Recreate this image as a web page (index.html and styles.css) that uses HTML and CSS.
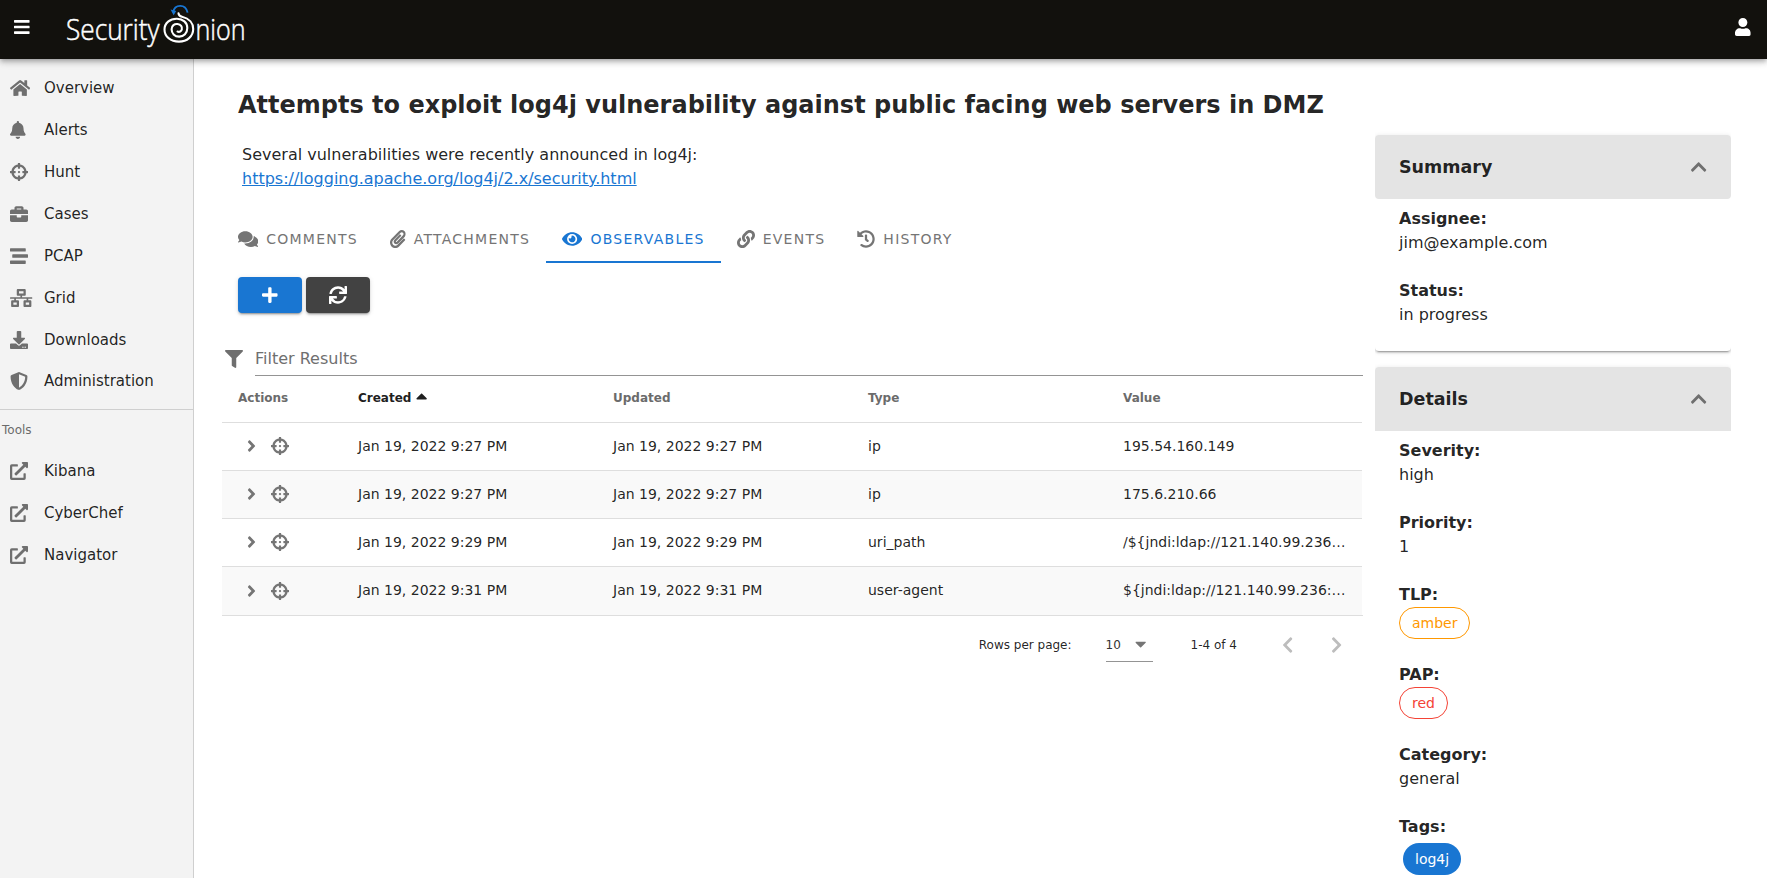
FILE: index.html
```html
<!DOCTYPE html>
<html lang="en">
<head>
<meta charset="utf-8">
<title>Security Onion</title>
<link rel="stylesheet" href="styles.css">
</head>
<body>
<svg class="sprite" aria-hidden="true">
  <symbol id="bars" viewBox="0 0 448 512"><path d="M16 132h416c8.837 0 16-7.163 16-16V76c0-8.837-7.163-16-16-16H16C7.163 60 0 67.163 0 76v40c0 8.837 7.163 16 16 16zm0 160h416c8.837 0 16-7.163 16-16v-40c0-8.837-7.163-16-16-16H16c-8.837 0-16 7.163-16 16v40c0 8.837 7.163 16 16 16zm0 160h416c8.837 0 16-7.163 16-16v-40c0-8.837-7.163-16-16-16H16c-8.837 0-16 7.163-16 16v40c0 8.837 7.163 16 16 16z"/></symbol>
  <symbol id="user" viewBox="0 0 448 512"><path d="M224 256c70.7 0 128-57.3 128-128S294.7 0 224 0 96 57.3 96 128s57.3 128 128 128zm89.6 32h-16.7c-22.2 10.2-46.9 16-72.9 16s-50.6-5.8-72.9-16h-16.7C60.2 288 0 348.2 0 422.4V464c0 26.5 21.5 48 48 48h352c26.5 0 48-21.5 48-48v-41.6c0-74.2-60.2-134.4-134.4-134.4z"/></symbol>
  <symbol id="home" viewBox="0 0 576 512"><path d="M280.37 148.26L96 300.11V464a16 16 0 0 0 16 16l112.06-.29a16 16 0 0 0 15.92-16V368a16 16 0 0 1 16-16h64a16 16 0 0 1 16 16v95.64a16 16 0 0 0 16 16.05L464 480a16 16 0 0 0 16-16V300L295.67 148.26a12.19 12.19 0 0 0-15.3 0zM571.6 251.47L488 182.56V44.05a12 12 0 0 0-12-12h-56a12 12 0 0 0-12 12v72.61L318.47 43a48 48 0 0 0-61 0L4.34 251.47a12 12 0 0 0-1.6 16.9l25.5 31A12 12 0 0 0 45.15 301l235.22-193.74a12.19 12.19 0 0 1 15.3 0L530.9 301a12 12 0 0 0 16.9-1.6l25.5-31a12 12 0 0 0-1.7-16.93z"/></symbol>
  <symbol id="bell" viewBox="0 0 448 512"><path d="M224 512c35.32 0 63.97-28.65 63.97-64H160.03c0 35.35 28.65 64 63.97 64zm215.39-149.71c-19.32-20.76-55.47-51.99-55.47-154.29 0-77.7-54.48-139.9-127.94-155.16V32c0-17.67-14.32-32-31.98-32s-31.98 14.33-31.98 32v20.84C118.56 68.1 64.08 130.3 64.08 208c0 102.3-36.15 133.53-55.47 154.29-6 6.45-8.66 14.16-8.61 21.71.11 16.4 12.98 32 32.1 32h383.8c19.12 0 32-15.6 32.1-32 .05-7.55-2.61-15.27-8.61-21.71z"/></symbol>
  <symbol id="crosshairs" viewBox="0 0 512 512"><path d="M500 224h-30.364C455.724 130.325 381.675 56.276 288 42.364V12c0-6.627-5.373-12-12-12h-40c-6.627 0-12 5.373-12 12v30.364C130.325 56.276 56.276 130.325 42.364 224H12c-6.627 0-12 5.373-12 12v40c0 6.627 5.373 12 12 12h30.364C56.276 381.675 130.325 455.724 224 469.636V500c0 6.627 5.373 12 12 12h40c6.627 0 12-5.373 12-12v-30.364C381.675 455.724 455.724 381.675 469.636 288H500c6.627 0 12-5.373 12-12v-40c0-6.627-5.373-12-12-12zM288 404.634V364c0-6.627-5.373-12-12-12h-40c-6.627 0-12 5.373-12 12v40.634C165.826 392.232 119.783 346.243 107.366 288H148c6.627 0 12-5.373 12-12v-40c0-6.627-5.373-12-12-12h-40.634C119.768 165.826 165.757 119.783 224 107.366V148c0 6.627 5.373 12 12 12h40c6.627 0 12-5.373 12-12v-40.634C346.174 119.768 392.217 165.757 404.634 224H364c-6.627 0-12 5.373-12 12v40c0 6.627 5.373 12 12 12h40.634C392.232 346.174 346.243 392.217 288 404.634zM288 256c0 17.673-14.327 32-32 32s-32-14.327-32-32c0-17.673 14.327-32 32-32s32 14.327 32 32z"/></symbol>
  <symbol id="briefcase" viewBox="0 0 512 512"><path d="M320 336c0 8.84-7.16 16-16 16h-96c-8.84 0-16-7.16-16-16v-48H0v144c0 25.6 22.4 48 48 48h416c25.6 0 48-22.4 48-48V288H320v48zm144-208h-80V80c0-25.6-22.4-48-48-48H176c-25.6 0-48 22.4-48 48v48H48c-25.6 0-48 22.4-48 48v80h512v-80c0-25.6-22.4-48-48-48zm-144 0H192V96h128v32z"/></symbol>
  <symbol id="stream" viewBox="0 0 512 512"><path d="M16 128h416c8.84 0 16-7.16 16-16V48c0-8.84-7.16-16-16-16H16C7.16 32 0 39.16 0 48v64c0 8.84 7.16 16 16 16zm480 80H80c-8.84 0-16 7.16-16 16v64c0 8.84 7.16 16 16 16h416c8.84 0 16-7.16 16-16v-64c0-8.84-7.16-16-16-16zm-64 176H16c-8.84 0-16 7.16-16 16v64c0 8.84 7.16 16 16 16h416c8.84 0 16-7.16 16-16v-64c0-8.84-7.16-16-16-16z"/></symbol>
  <symbol id="network" viewBox="0 0 640 512"><path d="M640 264v-16c0-8.84-7.16-16-16-16H344v-40h72c17.67 0 32-14.33 32-32V32c0-17.67-14.33-32-32-32H224c-17.67 0-32 14.33-32 32v128c0 17.67 14.33 32 32 32h72v40H16c-8.84 0-16 7.16-16 16v16c0 8.84 7.16 16 16 16h104v40H64c-17.67 0-32 14.33-32 32v128c0 17.67 14.33 32 32 32h160c17.67 0 32-14.33 32-32V352c0-17.67-14.33-32-32-32h-56v-40h304v40h-56c-17.67 0-32 14.33-32 32v128c0 17.67 14.33 32 32 32h160c17.67 0 32-14.33 32-32V352c0-17.67-14.33-32-32-32h-56v-40h104c8.84 0 16-7.16 16-16zM256 128V64h128v64H256zm-64 320H96v-64h96v64zm352 0h-96v-64h96v64z"/></symbol>
  <symbol id="download" viewBox="0 0 512 512"><path d="M216 0h80c13.3 0 24 10.7 24 24v168h87.7c17.8 0 26.7 21.5 14.1 34.1L269.7 378.3c-7.5 7.5-19.8 7.5-27.3 0L90.1 226.1c-12.6-12.6-3.7-34.1 14.1-34.1H192V24c0-13.3 10.7-24 24-24zm296 376v112c0 13.3-10.7 24-24 24H24c-13.3 0-24-10.7-24-24V376c0-13.3 10.7-24 24-24h146.7l49 49c20.1 20.1 52.5 20.1 72.6 0l49-49H488c13.3 0 24 10.7 24 24zm-124 88c0-11-9-20-20-20s-20 9-20 20 9 20 20 20 20-9 20-20zm64 0c0-11-9-20-20-20s-20 9-20 20 9 20 20 20 20-9 20-20z"/></symbol>
  <symbol id="shield" viewBox="0 0 512 512"><path d="M466.5 83.7l-192-80a48.15 48.15 0 0 0-36.9 0l-192 80C27.7 91.1 16 108.6 16 128c0 198.5 114.5 335.7 221.5 380.3 11.8 4.9 25.1 4.9 36.9 0C360.1 472.6 496 349.3 496 128c0-19.4-11.7-36.9-29.5-44.3zM256.1 446.3l-.1-381 175.9 73.3c-3.3 151.4-82.1 261.1-175.8 307.7z"/></symbol>
  <symbol id="external" viewBox="0 0 512 512"><path d="M432,320H400a16,16,0,0,0-16,16V448H64V128H208a16,16,0,0,0,16-16V80a16,16,0,0,0-16-16H48A48,48,0,0,0,0,112V464a48,48,0,0,0,48,48H400a48,48,0,0,0,48-48V336A16,16,0,0,0,432,320ZM488,0h-128c-21.37,0-32.05,25.91-17,41l35.73,35.73L135,320.37a24,24,0,0,0,0,34L157.67,377a24,24,0,0,0,34,0L435.28,133.32,471,169c15,15,41,4.5,41-17V24A24,24,0,0,0,488,0Z"/></symbol>
  <symbol id="comments" viewBox="0 0 576 512"><path d="M416 192c0-88.4-93.1-160-208-160S0 103.6 0 192c0 34.3 14.1 65.9 38 92-13.4 30.2-35.5 54.2-35.8 54.5-2.2 2.3-2.8 5.7-1.5 8.7S4.8 352 8 352c36.6 0 66.9-12.3 88.7-25 32.2 15.7 70.3 25 111.3 25 114.9 0 208-71.6 208-160zm122 220c23.9-26 38-57.7 38-92 0-66.9-53.5-124.2-129.3-148.1.9 6.6 1.3 13.3 1.3 20.1 0 105.9-107.7 192-240 192-10.8 0-21.3-.8-31.7-1.9C207.8 439.6 281.8 480 368 480c41 0 79.1-9.2 111.3-25 21.8 12.7 52.1 25 88.7 25 3.2 0 6.1-1.9 7.3-4.8 1.3-2.9.7-6.3-1.5-8.7-.3-.3-22.4-24.2-35.8-54.5z"/></symbol>
  <symbol id="paperclip" viewBox="0 0 448 512"><path d="M43.246 466.142c-58.43-60.289-57.341-157.511 1.386-217.581L254.392 34c44.316-45.332 116.351-45.336 160.671 0 43.89 44.894 43.943 117.329 0 162.276L232.214 383.128c-29.855 30.537-78.633 30.111-107.982-.998-28.275-29.97-27.368-77.473 1.452-106.953l143.743-146.835c6.182-6.314 16.312-6.422 22.626-.241l22.861 22.379c6.315 6.182 6.422 16.312.241 22.626L171.427 319.927c-4.932 5.045-5.236 13.428-.648 18.292 4.372 4.634 11.245 4.711 15.688.165l182.849-186.851c19.613-20.062 19.613-52.725-.011-72.798-19.189-19.627-49.957-19.637-69.154 0L90.39 293.295c-34.763 35.56-35.299 93.12-1.191 128.313 34.01 35.093 88.985 35.137 123.058.286l172.06-175.999c6.177-6.319 16.307-6.433 22.626-.256l22.877 22.364c6.319 6.177 6.434 16.307.256 22.626l-172.06 175.998c-59.576 60.938-155.943 60.216-214.77-.485z"/></symbol>
  <symbol id="eye" viewBox="0 0 576 512"><path d="M572.52 241.4C518.29 135.59 410.93 64 288 64S57.68 135.64 3.48 241.41a32.35 32.35 0 0 0 0 29.19C57.71 376.41 165.07 448 288 448s230.32-71.64 284.52-177.41a32.35 32.35 0 0 0 0-29.19zM288 400a144 144 0 1 1 144-144 143.93 143.93 0 0 1-144 144zm0-240a95.31 95.31 0 0 0-25.31 3.79 47.85 47.85 0 0 1-66.9 66.9A95.78 95.78 0 1 0 288 160z"/></symbol>
  <symbol id="link" viewBox="0 0 512 512"><path d="M326.612 185.391c59.747 59.809 58.927 155.698.36 214.59-.11.12-.24.25-.36.37l-67.2 67.2c-59.27 59.27-155.699 59.262-214.96 0-59.27-59.26-59.27-155.7 0-214.96l37.106-37.106c9.84-9.84 26.786-3.3 27.294 10.606.648 17.722 3.826 35.527 9.69 52.721 1.986 5.822.567 12.262-3.783 16.612l-13.087 13.087c-28.026 28.026-28.905 73.66-1.155 101.96 28.024 28.579 74.086 28.749 102.325.51l67.2-67.19c28.191-28.191 28.073-73.757 0-101.83-3.701-3.694-7.429-6.564-10.341-8.569a16.037 16.037 0 0 1-6.947-12.606c-.396-10.567 3.348-21.456 11.698-29.806l21.054-21.055c5.521-5.521 14.182-6.199 20.584-1.731a152.482 152.482 0 0 1 20.522 17.197zM467.547 44.449c-59.261-59.262-155.69-59.27-214.96 0l-67.2 67.2c-.12.12-.25.25-.36.37-58.566 58.892-59.387 154.781.36 214.59a152.454 152.454 0 0 0 20.521 17.196c6.402 4.468 15.064 3.789 20.584-1.731l21.054-21.055c8.35-8.35 12.094-19.239 11.698-29.806a16.037 16.037 0 0 0-6.947-12.606c-2.912-2.005-6.64-4.875-10.341-8.569-28.073-28.073-28.191-73.639 0-101.83l67.2-67.19c28.239-28.239 74.3-28.069 102.325.51 27.75 28.3 26.872 73.934-1.155 101.96l-13.087 13.087c-4.35 4.35-5.769 10.79-3.783 16.612 5.864 17.194 9.042 34.999 9.69 52.721.509 13.906 17.454 20.446 27.294 10.606l37.106-37.106c59.271-59.259 59.271-155.699.001-214.959z"/></symbol>
  <symbol id="history" viewBox="0 0 512 512"><path d="M504 255.531c.253 136.64-111.18 248.372-247.82 248.468-59.015.042-113.223-20.53-155.822-54.911-11.077-8.94-11.905-25.541-1.839-35.607l11.267-11.267c8.609-8.609 22.353-9.551 31.891-1.984C173.062 425.135 212.781 440 256 440c101.705 0 184-82.311 184-184 0-101.705-82.311-184-184-184-48.814 0-93.149 18.969-126.068 49.932l50.754 50.754c10.08 10.08 2.941 27.314-11.313 27.314H24c-8.837 0-16-7.163-16-16V38.627c0-14.254 17.234-21.393 27.314-11.314l49.372 49.372C129.209 34.136 189.552 8 256 8c136.81 0 247.747 110.78 248 247.531zm-180.912 78.784l9.823-12.63c8.138-10.463 6.253-25.542-4.21-33.679L288 256.349V152c0-13.255-10.745-24-24-24h-16c-13.255 0-24 10.745-24 24v135.651l65.409 50.874c10.463 8.137 25.541 6.253 33.679-4.21z"/></symbol>
  <symbol id="plus" viewBox="0 0 448 512"><path d="M416 208H272V64c0-17.67-14.33-32-32-32h-32c-17.67 0-32 14.33-32 32v144H32c-17.67 0-32 14.33-32 32v32c0 17.67 14.33 32 32 32h144v144c0 17.67 14.33 32 32 32h32c17.67 0 32-14.33 32-32V304h144c17.67 0 32-14.33 32-32v-32c0-17.67-14.33-32-32-32z"/></symbol>
  <symbol id="sync" viewBox="0 0 512 512"><path d="M440.65 12.57l4 82.77A247.16 247.16 0 0 0 255.83 8C134.73 8 33.91 94.92 12.29 209.82A12 12 0 0 0 24.09 224h49.05a12 12 0 0 0 11.67-9.26 175.91 175.91 0 0 1 317-56.94l-101.46-4.86a12 12 0 0 0-12.57 12v47.41a12 12 0 0 0 12 12H500a12 12 0 0 0 12-12V12a12 12 0 0 0-12-12h-47.37a12 12 0 0 0-11.98 12.57zM255.83 432a175.61 175.61 0 0 1-146-77.8l101.8 4.87a12 12 0 0 0 12.57-12v-47.4a12 12 0 0 0-12-12H12a12 12 0 0 0-12 12V500a12 12 0 0 0 12 12h47.35a12 12 0 0 0 12-12.6l-4.15-82.57A247.17 247.17 0 0 0 255.83 504c121.11 0 221.93-86.92 243.55-201.82a12 12 0 0 0-11.8-14.18h-49.05a12 12 0 0 0-11.67 9.26A175.86 175.86 0 0 1 255.83 432z"/></symbol>
  <symbol id="filter" viewBox="0 0 512 512"><path d="M487.976 0H24.028C2.71 0-8.047 25.866 7.058 40.971L192 225.941V432c0 7.831 3.821 15.17 10.237 19.662l80 55.98C298.02 518.69 320 507.493 320 487.98V225.941l184.947-184.97C520.021 25.896 509.338 0 487.976 0z"/></symbol>
  <symbol id="angle" viewBox="0 0 256 512"><path d="M224.3 273l-136 136c-9.4 9.4-24.6 9.4-33.9 0l-22.6-22.6c-9.4-9.4-9.4-24.6 0-33.9l96.4-96.4-96.4-96.4c-9.4-9.4-9.4-24.6 0-33.9L54.3 103c9.4-9.4 24.6-9.4 33.9 0l136 136c9.5 9.4 9.5 24.6.1 34z"/></symbol>
  <symbol id="chevron" viewBox="0 0 320 512"><path d="M34.52 239.03L228.87 44.69c9.37-9.37 24.57-9.37 33.94 0l22.67 22.67c9.36 9.36 9.37 24.52.04 33.9L131.49 256l154.02 154.75c9.34 9.38 9.32 24.54-.04 33.9l-22.67 22.67c-9.37 9.37-24.57 9.37-33.94 0L34.52 272.97c-9.37-9.37-9.37-24.57 0-33.94z"/></symbol>
  <symbol id="caret" viewBox="0 0 320 512"><path d="M288.662 352H31.338c-17.818 0-26.741-21.543-14.142-34.142l128.662-128.662c7.81-7.81 20.474-7.81 28.284 0l128.662 128.662c12.6 12.599 3.676 34.142-14.142 34.142z"/></symbol>
</svg>

<header class="appbar">
  <svg class="icon w448"><use href="#bars"/></svg>
  <svg class="logo" viewBox="0 0 190 50" role="img" aria-label="Security Onion">
    <text class="logo-text" x="6" y="39.6" textLength="93.500" lengthAdjust="spacingAndGlyphs">Security</text>
    <text class="logo-text" x="135.500" y="39.6" textLength="50" lengthAdjust="spacingAndGlyphs">nion</text>
    <path class="bulb" d="M118.5 13.300C118.700 15.500 120 16.300 122 16.800C129.500 18.500 133.200 23.500 133.200 29C133.200 36.500 127 41.600 119 41.600C110.500 41.600 104.500 36.500 104.500 29.500C104.500 23 110 18.600 117 18.800C123 19 127.300 22.500 127.300 28C127.300 33 123.800 36.600 119.200 36.600C114.500 36.600 111.600 33.200 111.600 29.200C111.600 25.600 114.500 23.600 117.500 24C120.800 24.400 122.500 27 121.800 29.500C121.300 31.300 119.500 32.300 117.500 31.600"/>
    <path class="sprout" d="M113 12.500C113.700 8.600 116.500 5.900 120.300 5.900C124 5.900 126.600 8.400 127.600 12.600"/>
    <path class="sprout-tip" d="M110.600 9.600l3 5.700l2.600-4.300z"/>
  </svg>
  <svg class="icon w448 account"><use href="#user"/></svg>
</header>

<div class="shell">
  <nav class="sidebar">
    <a class="nav-item"><span class="nav-icon"><svg class="icon w576"><use href="#home"/></svg></span>Overview</a>
    <a class="nav-item"><span class="nav-icon"><svg class="icon w448"><use href="#bell"/></svg></span>Alerts</a>
    <a class="nav-item"><span class="nav-icon"><svg class="icon"><use href="#crosshairs"/></svg></span>Hunt</a>
    <a class="nav-item"><span class="nav-icon"><svg class="icon"><use href="#briefcase"/></svg></span>Cases</a>
    <a class="nav-item"><span class="nav-icon"><svg class="icon"><use href="#stream"/></svg></span>PCAP</a>
    <a class="nav-item"><span class="nav-icon"><svg class="icon w640"><use href="#network"/></svg></span>Grid</a>
    <a class="nav-item"><span class="nav-icon"><svg class="icon"><use href="#download"/></svg></span>Downloads</a>
    <a class="nav-item last"><span class="nav-icon"><svg class="icon"><use href="#shield"/></svg></span>Administration</a>
    <div class="nav-heading">Tools</div>
    <a class="nav-item"><span class="nav-icon"><svg class="icon"><use href="#external"/></svg></span>Kibana</a>
    <a class="nav-item"><span class="nav-icon"><svg class="icon"><use href="#external"/></svg></span>CyberChef</a>
    <a class="nav-item"><span class="nav-icon"><svg class="icon"><use href="#external"/></svg></span>Navigator</a>
  </nav>

  <main class="case">
    <h1 class="case-title">Attempts to exploit log4j vulnerability against public facing web servers in DMZ</h1>
    <div class="description">Several vulnerabilities were recently announced in log4j:<br><a class="link">https://logging.apache.org/log4j/2.x/security.html</a></div>

    <div class="tabs">
      <div class="tab"><svg class="icon w576"><use href="#comments"/></svg>COMMENTS</div>
      <div class="tab"><svg class="icon w448"><use href="#paperclip"/></svg>ATTACHMENTS</div>
      <div class="tab active"><svg class="icon w576"><use href="#eye"/></svg>OBSERVABLES</div>
      <div class="tab"><svg class="icon"><use href="#link"/></svg>EVENTS</div>
      <div class="tab"><svg class="icon"><use href="#history"/></svg>HISTORY</div>
    </div>

    <div class="buttons">
      <button class="btn primary"><svg class="icon w448"><use href="#plus"/></svg></button>
      <button class="btn dark"><svg class="icon"><use href="#sync"/></svg></button>
    </div>

    <div class="filter"><svg class="icon"><use href="#filter"/></svg><div class="filter-input">Filter Results</div></div>

    <table class="grid">
      <thead><tr><th class="actions">Actions</th><th class="sorted"><div class="sort-head">Created<svg class="icon w320 sort"><use href="#caret"/></svg></div></th><th>Updated</th><th>Type</th><th>Value</th></tr></thead>
      <tbody>
        <tr><td><div class="row-actions"><svg class="icon w256"><use href="#angle"/></svg><svg class="icon"><use href="#crosshairs"/></svg></div></td><td>Jan 19, 2022 9:27 PM</td><td>Jan 19, 2022 9:27 PM</td><td>ip</td><td>195.54.160.149</td></tr>
        <tr><td><div class="row-actions"><svg class="icon w256"><use href="#angle"/></svg><svg class="icon"><use href="#crosshairs"/></svg></div></td><td>Jan 19, 2022 9:27 PM</td><td>Jan 19, 2022 9:27 PM</td><td>ip</td><td>175.6.210.66</td></tr>
        <tr><td><div class="row-actions"><svg class="icon w256"><use href="#angle"/></svg><svg class="icon"><use href="#crosshairs"/></svg></div></td><td>Jan 19, 2022 9:29 PM</td><td>Jan 19, 2022 9:29 PM</td><td>uri_path</td><td>/${jndi:ldap://121.140.99.236…</td></tr>
        <tr><td><div class="row-actions"><svg class="icon w256"><use href="#angle"/></svg><svg class="icon"><use href="#crosshairs"/></svg></div></td><td>Jan 19, 2022 9:31 PM</td><td>Jan 19, 2022 9:31 PM</td><td>user-agent</td><td>${jndi:ldap://121.140.99.236:…</td></tr>
      </tbody>
    </table>
    <div class="pager">
      <span class="pager-label">Rows per page:</span>
      <div class="select"><span>10</span><svg class="icon w320 down"><use href="#caret"/></svg></div>
      <span class="range">1-4 of 4</span>
      <svg class="icon w320 page"><use href="#chevron"/></svg>
      <svg class="icon w320 page next"><use href="#chevron"/></svg>
    </div>
  </main>

  <aside class="panels">
    <section class="panel">
      <div class="panel-head">Summary<svg class="icon w320 up"><use href="#chevron"/></svg></div>
      <dl class="fields">
        <div class="field"><dt>Assignee:</dt><dd>jim@example.com</dd></div>
        <div class="field"><dt>Status:</dt><dd>in progress</dd></div>
      </dl>
    </section>
    <section class="panel">
      <div class="panel-head square">Details<svg class="icon w320 up"><use href="#chevron"/></svg></div>
      <dl class="fields">
        <div class="field"><dt>Severity:</dt><dd>high</dd></div>
        <div class="field"><dt>Priority:</dt><dd>1</dd></div>
        <div class="field"><dt>TLP:</dt><dd><span class="chip amber">amber</span></dd></div>
        <div class="field"><dt>PAP:</dt><dd><span class="chip red">red</span></dd></div>
        <div class="field"><dt>Category:</dt><dd>general</dd></div>
        <div class="field"><dt>Tags:</dt><dd><span class="chip tag">log4j</span></dd></div>
      </dl>
    </section>
  </aside>
</div>
</body>
</html>
```
FILE: styles.css
```css
* { box-sizing: border-box; }
body {
  margin: 0;
  height: 878px;
  overflow: hidden;
  background: #fff;
  color: rgba(0, 0, 0, .87);
  font: 16px/24px "DejaVu Sans", sans-serif;
}
.sprite { display: none; }
.icon { width: 18px; height: 18px; flex: none; fill: currentColor; }
.w256 { width: 9px; }
.w320 { width: 11.25px; }
.w448 { width: 15.75px; }
.w576 { width: 20.25px; }
.w640 { width: 22.5px; }

.appbar {
  position: relative;
  z-index: 1;
  display: flex;
  align-items: center;
  height: 59px;
  padding: 0 16px 5px 14px;
  background: #12110d;
  color: #fff;
  box-shadow: 0 2px 4px -1px rgba(0, 0, 0, .2), 0 4px 5px rgba(0, 0, 0, .14), 0 1px 10px rgba(0, 0, 0, .12);
}
.logo { width: 190px; height: 50px; margin-left: 30.25px; align-self: flex-start; overflow: visible; }
.logo-text { font-family: "Open Sans", sans-serif; font-weight: 300; font-size: 29px; fill: #fff; stroke: #fff; stroke-width: .5; }
.bulb { fill: none; stroke: #fff; stroke-width: 2.1; stroke-linecap: round; }
.sprout { fill: none; stroke: #1976d2; stroke-width: 1.9; }
.sprout-tip { fill: #1976d2; }
.account { margin-left: auto; }

.shell { display: flex; height: 819px; }
.sidebar { width: 194px; padding-top: 8px; background: #f3f3f3; border-right: 1px solid #cfcfcf; font-size: 15px; }
.nav-item { display: flex; align-items: center; height: 42px; padding-left: 10px; }
.nav-icon { display: flex; width: 34px; color: #6f6f6f; }
.last { height: 40px; }
.nav-heading { height: 41px; margin-top: 8px; padding-left: 2px; border-top: 1px solid #cfcfcf; font-size: 12px; line-height: 41px; color: #6b6b6b; }

.case { width: 1141px; margin-left: 28px; padding-top: 30px; }
.case-title { margin: 0; padding-left: 16px; font-size: 24px; line-height: 32px; white-space: nowrap; }
.description { padding: 22px 20px 0; }
.link { color: #1976d2; text-decoration: underline; }
.tabs { display: flex; height: 48px; margin-top: 24px; font-size: 14px; letter-spacing: 1.25px; color: #757575; }
.tab { display: flex; align-items: center; gap: 8px; padding: 2px 16px 0; border-bottom: 2px solid transparent; }
.active { color: #1976d2; border-color: #1976d2; }
.buttons { display: flex; gap: 4px; padding: 14px 16px 0; }
.btn {
  display: flex;
  align-items: center;
  justify-content: center;
  width: 64px;
  height: 36px;
  padding: 0;
  border: 0;
  border-radius: 4px;
  color: #fff;
  box-shadow: 0 3px 1px -2px rgba(0, 0, 0, .2), 0 2px 2px rgba(0, 0, 0, .14), 0 1px 5px rgba(0, 0, 0, .12);
}
.primary { background: #1976d2; }
.dark { background: #424242; }

.filter { display: flex; gap: 12px; height: 33px; margin-top: 30px; padding-left: 3px; color: #6f6f6f; }
.filter > .icon { margin-top: 7px; }
.filter-input { flex: 1; padding-top: 4px; border-bottom: 1px solid #949494; }

.grid { width: 1140px; table-layout: fixed; border-spacing: 0; font-size: 14px; line-height: 20px; }
.grid th { height: 47px; padding: 0 16px 2px; border-bottom: 1px solid #dedede; font-size: 12px; text-align: left; color: #6b6b6b; }
.grid .actions { width: 120px; }
.grid .sorted { color: #1f1f1f; }
.sort-head { display: flex; align-items: flex-start; gap: 5px; height: 20px; }
.sort { margin-top: -1px; }
.grid td { height: 48px; padding: 0 16px 2px; border-bottom: 1px solid #dedede; white-space: nowrap; }
.grid tr:last-child td { border-bottom: 0; }
.grid tbody tr:nth-child(even) { background: #f9f9f9; }
.row-actions { display: flex; gap: 14.5px; padding: 1px 0 0 9px; color: #757575; }
.grid thead tr:last-child th { border-bottom: 1px solid #dedede; }

.pager { display: flex; align-items: center; height: 60px; padding: 0 20.5px 1px 0; border-top: 1px solid #dedede; font-size: 12px; justify-content: flex-end; }
.select { display: flex; align-items: center; justify-content: space-between; width: 47px; height: 33px; margin: 0 38px 0 34px; padding-right: 6px; border-bottom: 1px solid #949494; color: #333; }
.down { transform: rotate(180deg); color: #757575; }
.range { margin-right: 45px; }
.page { color: #bdbdbd; margin-right: 38px; }
.next { transform: scaleX(-1); margin-right: 0; }

.panels { width: 356px; margin-left: 12px; padding-top: 76px; overflow: hidden; }
.panel { margin-bottom: 16px; border-radius: 4px; box-shadow: 0 3px 1px -2px rgba(0, 0, 0, .2), 0 2px 2px rgba(0, 0, 0, .14), 0 1px 5px rgba(0, 0, 0, .12); }
.panel-head { display: flex; align-items: center; justify-content: space-between; height: 64px; padding: 0 27px 0 24px; border-radius: 4px; background: #e4e4e4; font-size: 17.5px; font-weight: bold; }
.square { border-radius: 4px 4px 0 0; }
.up { transform: rotate(90deg); color: #6f6f6f; }
.fields { margin: 0; padding: 8px 24px 0; }
.field { padding-bottom: 24px; }
.field dt { font-weight: bold; }
.field dd { display: flex; margin: 0; }
.chip { height: 32px; padding: 0 12px; border: 1px solid; border-radius: 16px; font-size: 14px; line-height: 30px; }
.amber { color: #ff9800; }
.red { color: #f44336; }
.tag { margin: 4px; border: 0; line-height: 32px; background: #1976d2; color: #fff; }
```
